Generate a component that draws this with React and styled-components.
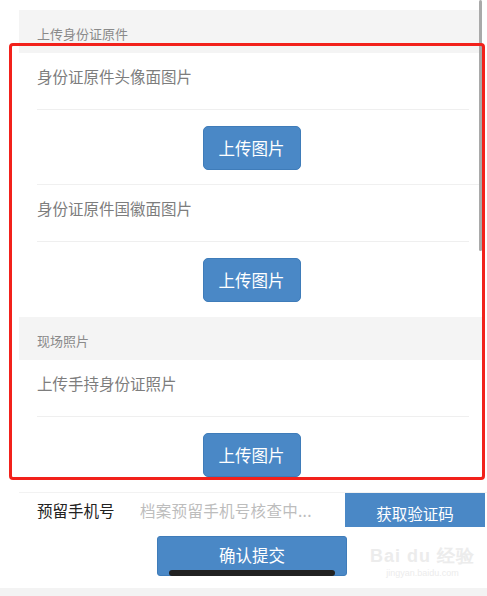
import React from "react";
import styled, { createGlobalStyle } from "styled-components";

const GlobalStyle = createGlobalStyle`
    html, body {
        margin: 0;
        padding: 0;
        background: #fff;
    }
    body {
        font-family: "Noto Sans CJK SC", "Noto Sans", sans-serif;
    }
`;

const Page = styled.div`
    position: relative;
    width: 487px;
    height: 596px;
    overflow: hidden;
    background: #fff;
    padding-top: 10px;
    box-sizing: border-box;
`;

const Section = styled.div`
    margin-left: 19px;
    margin-right: 5px;
`;

const SectionHeader = styled.div`
    height: 43px;
    background: #f4f4f4;
    padding: 14px 0 0 18px;
    box-sizing: border-box;
    font-size: 13px;
    line-height: 20px;
    color: #8a8a8a;
`;

const LabelRow = styled.div`
    height: 57px;
    margin: 0 13px 0 18px;
    padding-top: 12px;
    box-sizing: border-box;
    border-bottom: 1px solid #efefef;
    font-size: 15.5px;
    line-height: 22px;
    color: #7d7d7d;
`;

const ButtonRow = styled.div`
    height: 75px;
    margin-left: 18px;
    padding: 16px 18px 0 0;
    box-sizing: border-box;
    border-bottom: 1px solid ${p => (p.line ? "#f0f0f0" : "transparent")};
    display: flex;
    justify-content: center;
`;

const UploadButton = styled.button`
    width: 98px;
    height: 44px;
    margin-left: 2px;
    border: 1px solid #3f7cb9;
    border-radius: 5px;
    background: #4a88c6;
    color: #fff;
    font-family: inherit;
    font-size: 16.5px;
    padding: 0;
`;

const PhoneRow = styled.div`
    display: flex;
    align-items: center;
    height: 34px;
    margin-left: 19px;
    border-top: 1px solid #f2f2f2;
`;

const PhoneLabel = styled.span`
    width: 103px;
    padding-left: 18px;
    font-size: 15.5px;
    color: #222;
`;

const PhoneInput = styled.span`
    flex: 1;
    font-size: 15.5px;
    color: #bdbdbd;
    letter-spacing: 0.3px;
`;

const CodeButton = styled.button`
    width: 140px;
    height: 34px;
    margin-right: 2px;
    border: none;
    background: #4a88c6;
    color: #fff;
    font-family: inherit;
    font-size: 15.5px;
    padding: 6px 0 0;
`;

const SubmitButton = styled.button`
    display: block;
    width: 190px;
    height: 40px;
    margin: 9px 0 0 157px;
    border: 1px solid #3f7cb9;
    border-radius: 3px;
    background: #4a88c6;
    color: #fff;
    font-family: inherit;
    font-size: 16.5px;
    padding: 0 0 3px;
`;

const BottomBand = styled.div`
    position: absolute;
    left: 0;
    right: 0;
    bottom: 0;
    height: 8px;
    background: #f3f3f3;
`;

const Highlight = styled.div`
    position: absolute;
    left: 9px;
    top: 43px;
    width: 476px;
    height: 437px;
    border: 3px solid #f2211b;
    border-radius: 4px;
    box-sizing: border-box;
    pointer-events: none;
`;

const ScrollBar = styled.div`
    position: absolute;
    left: 479px;
    top: 0;
    width: 3px;
    height: 251px;
    background: #a9a9a9;
    border-radius: 2px;
`;

const HomeBar = styled.div`
    position: absolute;
    left: 169px;
    top: 570px;
    width: 166px;
    height: 6px;
    background: #222;
    border-radius: 3px;
`;

const Watermark = styled.div`
    position: absolute;
    left: 370px;
    top: 547px;
    color: #ececec;
    font-family: "Liberation Sans", sans-serif;
    line-height: 1;
    text-align: center;
`;

const MarkTop = styled.div`
    font-size: 18px;
    font-weight: bold;
    letter-spacing: 1px;
`;

const MarkSub = styled.div`
    font-size: 9px;
    margin-top: 4px;
`;

export default function App() {
    return (
        <>
            <GlobalStyle />
            <Page>
                <Section>
                    <SectionHeader>上传身份证原件</SectionHeader>
                    <LabelRow>身份证原件头像面图片</LabelRow>
                    <ButtonRow line>
                        <UploadButton>上传图片</UploadButton>
                    </ButtonRow>
                    <LabelRow>身份证原件国徽面图片</LabelRow>
                    <ButtonRow>
                        <UploadButton>上传图片</UploadButton>
                    </ButtonRow>
                    <SectionHeader>现场照片</SectionHeader>
                    <LabelRow>上传手持身份证照片</LabelRow>
                    <ButtonRow>
                        <UploadButton>上传图片</UploadButton>
                    </ButtonRow>
                </Section>
                <PhoneRow>
                    <PhoneLabel>预留手机号</PhoneLabel>
                    <PhoneInput>档案预留手机号核查中...</PhoneInput>
                    <CodeButton>获取验证码</CodeButton>
                </PhoneRow>
                <SubmitButton>确认提交</SubmitButton>
                <BottomBand />
                <Watermark>
                    <MarkTop>Bai du 经验</MarkTop>
                    <MarkSub>jingyan.baidu.com</MarkSub>
                </Watermark>
                <ScrollBar />
                <Highlight />
                <HomeBar />
            </Page>
        </>
    );
}
